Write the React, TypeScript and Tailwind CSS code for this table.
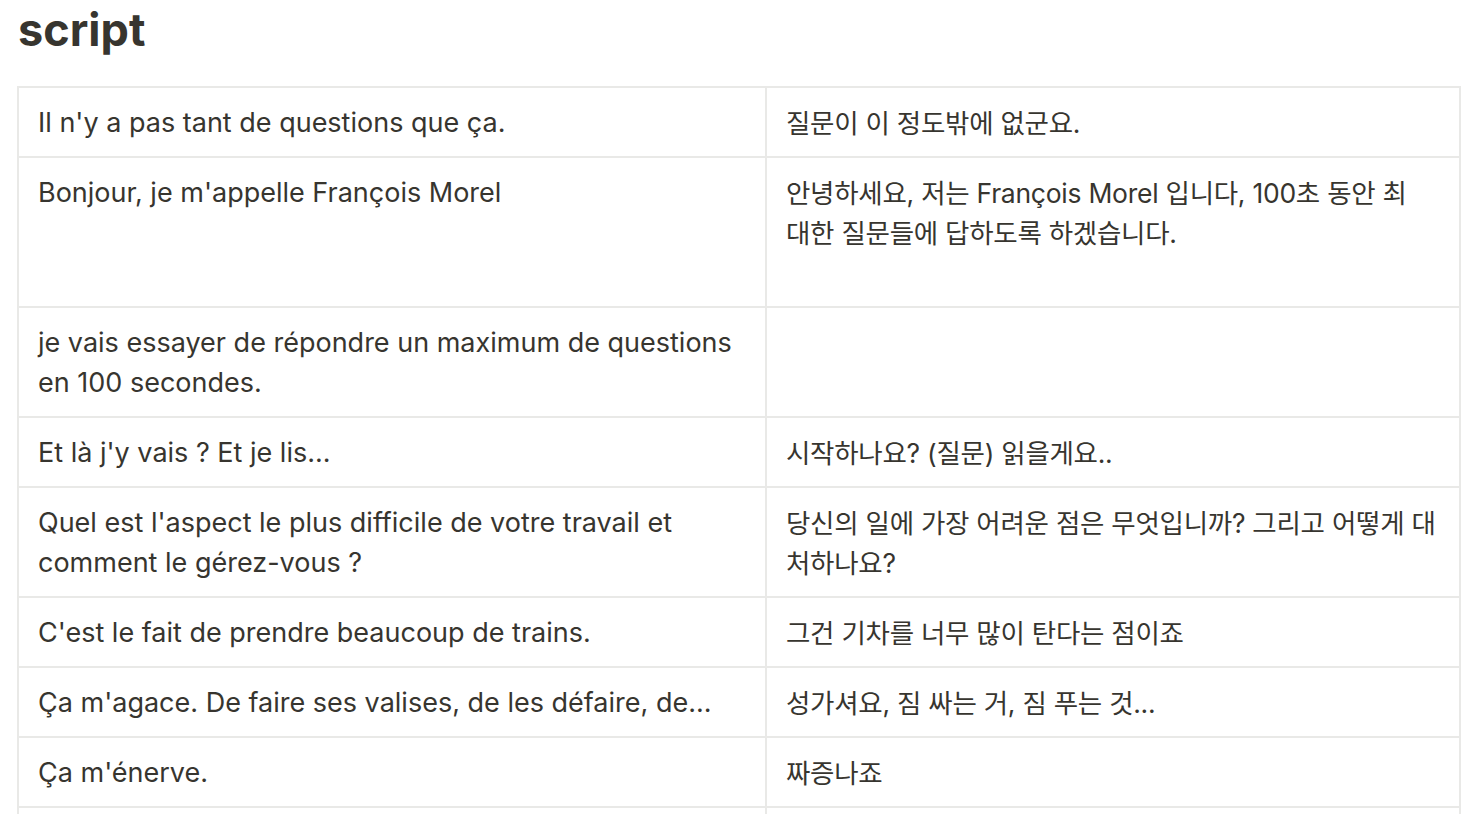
const rows: { fr: React.ReactNode; ko: React.ReactNode; h: string }[] = [
  { fr: "Il n'y a pas tant de questions que ça.", ko: "질문이 이 정도밖에 없군요.", h: "h-[70px]" },
  {
    fr: "Bonjour, je m'appelle François Morel",
    ko: (
      <>
        안녕하세요, 저는 François Morel 입니다, 100초 동안 최<br />
        대한 질문들에 답하도록 하겠습니다.
      </>
    ),
    h: "h-[150px]",
  },
  {
    fr: (
      <>
        je vais essayer de répondre un maximum de questions
        <br />
        en 100 secondes.
      </>
    ),
    ko: "",
    h: "h-[110px]",
  },
  { fr: "Et là j'y vais ? Et je lis...", ko: "시작하나요? (질문) 읽을게요..", h: "h-[70px]" },
  {
    fr: (
      <>
        Quel est l'aspect le plus difficile de votre travail et
        <br />
        comment le gérez-vous ?
      </>
    ),
    ko: (
      <>
        당신의 일에 가장 어려운 점은 무엇입니까? 그리고 어떻게 대<br />
        처하나요?
      </>
    ),
    h: "h-[110px]",
  },
  { fr: "C'est le fait de prendre beaucoup de trains.", ko: "그건 기차를 너무 많이 탄다는 점이죠", h: "h-[70px]" },
  { fr: "Ça m'agace. De faire ses valises, de les défaire, de...", ko: "성가셔요, 짐 싸는 거, 짐 푸는 것...", h: "h-[70px]" },
  { fr: "Ça m'énerve.", ko: "짜증나죠", h: "h-[70px]" },
  { fr: "", ko: "", h: "h-[70px]" },
];

export default function App() {
  return (
    <div
      className="min-h-screen bg-white text-[#37352f] overflow-hidden"
      style={{ fontFamily: 'Inter, "Noto Sans CJK KR", sans-serif' }}
    >
      <h2 className="pl-[18px] pt-[3px] text-[45px] font-bold leading-[54px]">script</h2>

      <div className="mt-[29px] ml-[17px] w-[1444px] border-t-2 border-l-2 border-[#e9e9e7]">
        {rows.map((r, i) => (
          <div key={i} className={`grid grid-cols-[748px_694px] border-b-2 border-[#e9e9e7] ${r.h}`}>
            <div className="whitespace-nowrap border-r-2 border-[#e9e9e7] px-[19px] pt-[15px] pb-[13px] text-[27px] leading-[40px]">
              {r.fr}
            </div>
            <div className="whitespace-nowrap border-r-2 border-[#e9e9e7] px-[19px] pt-[15px] pb-[13px] text-[26.5px] leading-[40px] tracking-[-0.01em]">
              {r.ko}
            </div>
          </div>
        ))}
      </div>
    </div>
  );
}
